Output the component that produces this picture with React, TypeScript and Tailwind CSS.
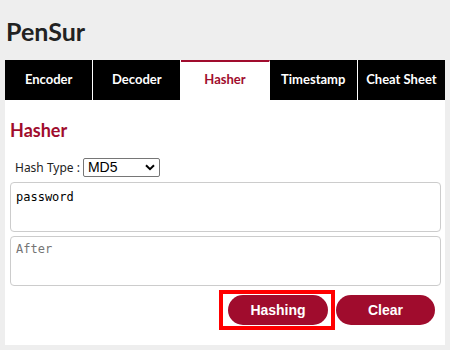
import { useState } from "react";

const tabs = ["Encoder", "Decoder", "Hasher", "Timestamp", "Cheat Sheet"];

const App = () => {
  const [active, setActive] = useState("Hasher");
  const [input, setInput] = useState("password");
  const [output, setOutput] = useState("");
  const [hashType, setHashType] = useState("MD5");

  return (
    <div className="min-h-[350px] bg-[#eeeeee] px-[5px] pb-[5px] font-['Lato',sans-serif] text-[#222]">
      <h1 className="pt-[14px] pb-[12px] pl-[1px] text-[25px] font-bold leading-[34px]">PenSur</h1>

      {/* Tabs */}
      <div className="flex h-[40px]">
        {tabs.map((tab) => (
          <button
            key={tab}
            onClick={() => setActive(tab)}
            className={`flex-1 border-r border-white text-[13px] font-bold last:border-r-0 ${
              active === tab
                ? "border-t-2 border-t-[#a00c2d] bg-white pb-[2px] text-[#a00c2d]"
                : "bg-black text-white"
            }`}
          >
            {tab}
          </button>
        ))}
      </div>

      {/* Panel */}
      <div className="bg-white pl-[5px] pr-[4px] pb-[20px]">
        <h2 className="pt-[18px] text-[18px] font-bold leading-[24px] text-[#a00c2d]">Hasher</h2>
        <div className="mt-[16px] flex items-center pl-[5px] font-['Noto_Sans',sans-serif] text-[12px]">
          <span className="mr-[3px]">Hash Type :</span>
          <div className="relative">
            <select
              value={hashType}
              onChange={(e) => setHashType(e.target.value)}
              className="h-[19px] w-[77px] appearance-none rounded-[2px] border border-[#767676] bg-white pl-[4px] font-['Liberation_Sans',sans-serif] text-[14px] leading-[17px] text-black outline-none"
            >
              <option>MD5</option>
              <option>SHA1</option>
              <option>SHA256</option>
            </select>
            <svg
              className="pointer-events-none absolute right-[5px] top-[6px]"
              width="10"
              height="7"
              viewBox="0 0 10 7"
            >
              <path d="M1 1.2 L5 5.2 L9 1.2" fill="none" stroke="#000" strokeWidth="2" />
            </svg>
          </div>
        </div>
        <textarea
          value={input}
          onChange={(e) => setInput(e.target.value)}
          className="mt-[5px] block h-[50px] w-full resize-none rounded-[4px] border border-[#cccccc] px-[5px] pt-[6px] pb-[3px] font-['DejaVu_Sans_Mono',monospace] text-[12px] leading-[16px] text-black outline-none"
        />
        <textarea
          value={output}
          onChange={(e) => setOutput(e.target.value)}
          placeholder="After"
          className="mt-[4px] block h-[50px] w-full resize-none rounded-[4px] border border-[#cccccc] px-[5px] pt-[4px] pb-[3px] font-['DejaVu_Sans_Mono',monospace] text-[12px] leading-[16px] text-black outline-none placeholder:text-[#757575]"
        />
        <div className="mt-[9px] flex justify-end gap-[8px] pr-[6px] font-['Liberation_Sans',sans-serif]">
          <div className="relative">
            <button className="h-[30px] w-[100px] rounded-full bg-[#a00c2d] text-[14px] font-bold text-white">
              Hashing
            </button>
            {/* highlight overlay */}
            <div className="pointer-events-none absolute left-[-9px] right-[-7px] top-[-5px] bottom-[-5px] border-4 border-[#ff0000]" />
          </div>
          <button
            onClick={() => {
              setInput("");
              setOutput("");
            }}
            className="h-[30px] w-[99px] rounded-full bg-[#a00c2d] text-[14px] font-bold text-white"
          >
            Clear
          </button>
        </div>
      </div>
    </div>
  );
};

export default App;
